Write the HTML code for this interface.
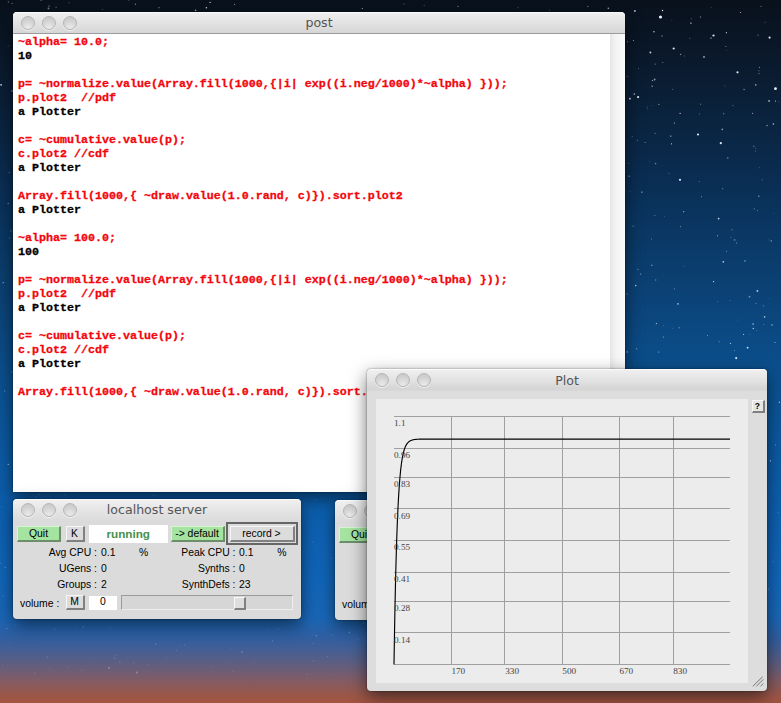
<!DOCTYPE html>
<html><head><meta charset="utf-8"><title>post</title>
<style>
html,body{margin:0;padding:0;}
body{width:781px;height:703px;overflow:hidden;position:relative;font-family:"Liberation Sans",sans-serif;
background:linear-gradient(to bottom,#09111c 0px,#0a1626 40px,#0a2038 100px,#0a2a4c 160px,#0a3560 220px,#0b4072 280px,#0b4a84 340px,#0b5496 400px,#0c5ba6 460px,#0d61b2 520px,#1166ba 580px,#1a67b8 618px,#305fa2 637px,#415f96 648px,#5f5e80 664px,#7f5c68 679px,#98574c 693px,#a4543f 703px);}
#stars{position:absolute;left:0;top:0;}
.win{position:absolute;border-radius:4px 4px 0 0;box-shadow:0 6px 18px rgba(0,0,0,.55),0 0 2px rgba(0,0,0,.5);overflow:hidden;}
.tb{position:absolute;left:0;right:0;top:0;background:linear-gradient(#f0f0f0,#e3e3e3 50%,#d6d6d6);border-bottom:1px solid #9c9c9c;border-radius:4px 4px 0 0;box-shadow:inset 0 1px 0 rgba(255,255,255,.7);}
.tt{position:absolute;text-align:center;color:#555;font-size:12.6px;font-family:"DejaVu Sans","Liberation Sans",sans-serif;}
.tl{position:absolute;top:4px;width:12px;height:12px;border-radius:50%;border:1px solid #b6b6b6;background:radial-gradient(circle at 50% 90%,#ebebeb,#d6d6d6 50%,#c4c4c4);box-shadow:0 1px 0 rgba(255,255,255,.6);}
.ln{font-family:"Liberation Mono",monospace;font-weight:bold;font-size:11.667px;line-height:14px;height:14px;white-space:pre;-webkit-text-stroke:0.3px currentColor;}
.r{color:#f4060c}.k{color:#000}
.sbody{position:absolute;left:0;right:0;top:22px;bottom:0;background:#dadada;}
.btn{position:absolute;box-sizing:border-box;border:solid;border-width:1px 2px 2px 1px;border-color:#f6f6f6 #808080 #808080 #f6f6f6;background:#dcdcdc;font-size:10.4px;line-height:13px;text-align:center;color:#000;white-space:nowrap;}
.btn.g{background:#a4e3a0;border-color:#d6f5d3 #6c8f6a #6c8f6a #d6f5d3}
.run{position:absolute;background:#fff;color:#46904c;font-weight:bold;font-size:11.7px;line-height:18px;text-align:center}
.rec{position:absolute;border:2px solid #666;box-sizing:border-box;}
.lb{position:absolute;font-size:10.4px;line-height:16px;color:#000;white-space:nowrap}
.num{position:absolute;background:#fff;font-size:10.4px;line-height:12px;text-align:center;box-sizing:border-box}
.sld{position:absolute;background:#d6d6d6;border:1px solid;border-color:#9a9a9a #eee #eee #9a9a9a;box-sizing:border-box}
.knob{position:absolute;box-sizing:border-box;background:#dedede;border:solid;border-width:1px 2px 2px 1px;border-color:#f8f8f8 #808080 #808080 #f8f8f8}
svg text{font-family:"Liberation Serif",serif;font-size:9.2px;fill:#444}
</style></head><body>
<svg id="stars" width="781" height="703" viewBox="0 0 781 703" fill="#e8f0ff">
<circle cx="331.5" cy="558.0" r="0.45" fill-opacity="0.41"/>
<circle cx="363.6" cy="623.2" r="0.6" fill-opacity="0.22"/>
<circle cx="224.9" cy="661.5" r="0.45" fill-opacity="0.17"/>
<circle cx="267.1" cy="629.8" r="0.6" fill-opacity="0.15"/>
<circle cx="683.7" cy="211.7" r="0.6" fill-opacity="0.69"/>
<circle cx="737.8" cy="320.0" r="0.45" fill-opacity="0.34"/>
<circle cx="641.9" cy="192.1" r="0.6" fill-opacity="0.88"/>
<circle cx="734.6" cy="239.9" r="0.9" fill-opacity="0.38"/>
<circle cx="680.6" cy="54.4" r="0.7" fill-opacity="0.56"/>
<circle cx="770.4" cy="460.8" r="0.6" fill-opacity="0.92"/>
<circle cx="3.2" cy="282.7" r="0.6" fill-opacity="0.70"/>
<circle cx="148.9" cy="664.5" r="0.7" fill-opacity="0.11"/>
<circle cx="41.1" cy="0.2" r="0.5" fill-opacity="0.65"/>
<circle cx="763.7" cy="324.2" r="0.55" fill-opacity="0.36"/>
<circle cx="647.3" cy="109.0" r="0.4" fill-opacity="0.43"/>
<circle cx="312.9" cy="542.1" r="0.5" fill-opacity="0.29"/>
<circle cx="349.3" cy="632.4" r="0.6" fill-opacity="0.41"/>
<circle cx="656.4" cy="323.6" r="0.6" fill-opacity="0.82"/>
<circle cx="629.9" cy="98.7" r="0.9" fill-opacity="0.94"/>
<circle cx="102.3" cy="9.6" r="0.45" fill-opacity="0.64"/>
<circle cx="645.2" cy="142.4" r="0.55" fill-opacity="0.44"/>
<circle cx="636.6" cy="348.8" r="0.8" fill-opacity="0.38"/>
<circle cx="689.8" cy="38.3" r="0.5" fill-opacity="0.48"/>
<circle cx="700.6" cy="104.2" r="0.6" fill-opacity="0.39"/>
<circle cx="755.7" cy="148.2" r="0.45" fill-opacity="0.56"/>
<circle cx="773.1" cy="561.8" r="0.5" fill-opacity="0.34"/>
<circle cx="230.7" cy="648.4" r="0.45" fill-opacity="0.25"/>
<circle cx="758.9" cy="70.7" r="0.55" fill-opacity="0.48"/>
<circle cx="699.2" cy="181.5" r="0.4" fill-opacity="0.71"/>
<circle cx="195.6" cy="10.4" r="0.8" fill-opacity="0.66"/>
<circle cx="651.8" cy="265.3" r="0.8" fill-opacity="0.50"/>
<circle cx="109.1" cy="667.8" r="1.1" fill-opacity="0.26"/>
<circle cx="210.1" cy="2.4" r="0.6" fill-opacity="0.93"/>
<circle cx="754.2" cy="208.9" r="0.6" fill-opacity="0.42"/>
<circle cx="638.1" cy="97.1" r="1.1" fill-opacity="0.95"/>
<circle cx="769.1" cy="100.9" r="0.9" fill-opacity="0.72"/>
<circle cx="634.3" cy="94.0" r="0.8" fill-opacity="0.79"/>
<circle cx="634.9" cy="10.9" r="0.9" fill-opacity="0.82"/>
<circle cx="54.8" cy="629.3" r="0.8" fill-opacity="0.16"/>
<circle cx="759.5" cy="67.2" r="0.5" fill-opacity="0.74"/>
<circle cx="698.0" cy="134.5" r="1.1" fill-opacity="0.95"/>
<circle cx="756.1" cy="303.3" r="0.55" fill-opacity="0.55"/>
<circle cx="726.7" cy="50.4" r="0.45" fill-opacity="0.39"/>
<circle cx="744.1" cy="89.5" r="0.8" fill-opacity="0.48"/>
<circle cx="684.3" cy="266.0" r="0.5" fill-opacity="0.30"/>
<circle cx="1.4" cy="506.7" r="0.6" fill-opacity="0.17"/>
<circle cx="306.9" cy="674.1" r="0.9" fill-opacity="0.09"/>
<circle cx="116.3" cy="655.3" r="0.6" fill-opacity="0.17"/>
<circle cx="291.6" cy="645.3" r="0.4" fill-opacity="0.22"/>
<circle cx="38.6" cy="494.3" r="0.7" fill-opacity="0.31"/>
<circle cx="679.1" cy="327.7" r="0.8" fill-opacity="0.38"/>
<circle cx="707.6" cy="335.5" r="0.5" fill-opacity="0.59"/>
<circle cx="632.1" cy="136.4" r="0.4" fill-opacity="0.79"/>
<circle cx="755.8" cy="84.9" r="0.8" fill-opacity="0.64"/>
<circle cx="662.8" cy="62.5" r="0.5" fill-opacity="0.55"/>
<circle cx="756.2" cy="330.6" r="0.45" fill-opacity="0.55"/>
<circle cx="759.3" cy="167.7" r="0.45" fill-opacity="0.45"/>
<circle cx="759.0" cy="73.5" r="0.7" fill-opacity="0.36"/>
<circle cx="1.1" cy="84.8" r="0.9" fill-opacity="0.90"/>
<circle cx="8.2" cy="203.5" r="0.7" fill-opacity="0.48"/>
<circle cx="655.6" cy="163.6" r="0.8" fill-opacity="0.45"/>
<circle cx="757.5" cy="210.4" r="0.5" fill-opacity="0.45"/>
<circle cx="743.5" cy="334.6" r="0.5" fill-opacity="0.88"/>
<circle cx="711.0" cy="38.1" r="0.9" fill-opacity="0.40"/>
<circle cx="166.3" cy="657.4" r="0.5" fill-opacity="0.15"/>
<circle cx="769.3" cy="298.6" r="0.45" fill-opacity="0.30"/>
<circle cx="274.5" cy="644.9" r="0.45" fill-opacity="0.18"/>
<circle cx="627.4" cy="41.8" r="0.5" fill-opacity="0.79"/>
<circle cx="2.9" cy="510.0" r="0.45" fill-opacity="0.14"/>
<circle cx="745.0" cy="260.9" r="0.55" fill-opacity="0.89"/>
<circle cx="6.8" cy="628.4" r="0.55" fill-opacity="0.38"/>
<circle cx="254.4" cy="661.6" r="0.45" fill-opacity="0.25"/>
<circle cx="775.1" cy="342.4" r="0.5" fill-opacity="0.72"/>
<circle cx="3.5" cy="595.8" r="0.5" fill-opacity="0.38"/>
<circle cx="726.5" cy="251.2" r="0.5" fill-opacity="0.59"/>
<circle cx="158.9" cy="7.7" r="0.6" fill-opacity="0.57"/>
<circle cx="211.8" cy="666.9" r="0.55" fill-opacity="0.15"/>
<circle cx="316.3" cy="635.7" r="0.6" fill-opacity="0.40"/>
<circle cx="640.7" cy="274.1" r="0.6" fill-opacity="0.60"/>
<circle cx="11.6" cy="372.2" r="0.6" fill-opacity="0.36"/>
<circle cx="723.3" cy="261.8" r="0.9" fill-opacity="0.75"/>
<circle cx="733.0" cy="105.6" r="0.6" fill-opacity="0.38"/>
<circle cx="654.6" cy="79.5" r="0.9" fill-opacity="0.60"/>
<circle cx="2.7" cy="665.5" r="0.7" fill-opacity="0.12"/>
<circle cx="64.2" cy="495.0" r="0.8" fill-opacity="0.16"/>
<circle cx="753.1" cy="324.0" r="0.9" fill-opacity="0.47"/>
<circle cx="699.3" cy="113.9" r="0.55" fill-opacity="0.37"/>
<circle cx="81.7" cy="670.1" r="0.6" fill-opacity="0.21"/>
<circle cx="242.2" cy="651.9" r="0.9" fill-opacity="0.24"/>
<circle cx="647.0" cy="107.1" r="0.4" fill-opacity="0.91"/>
<circle cx="206.4" cy="7.8" r="0.8" fill-opacity="0.88"/>
<circle cx="128.9" cy="0.3" r="0.4" fill-opacity="0.65"/>
<circle cx="608.3" cy="8.3" r="0.8" fill-opacity="0.73"/>
<circle cx="137.0" cy="672.6" r="1.1" fill-opacity="0.26"/>
<circle cx="753.8" cy="146.4" r="0.8" fill-opacity="0.31"/>
<circle cx="764.6" cy="316.9" r="0.8" fill-opacity="0.75"/>
<circle cx="83.3" cy="626.9" r="0.6" fill-opacity="0.42"/>
<circle cx="155.7" cy="644.2" r="0.8" fill-opacity="0.24"/>
<circle cx="737.5" cy="72.3" r="1.1" fill-opacity="0.95"/>
<circle cx="726.4" cy="32.7" r="0.6" fill-opacity="0.89"/>
<circle cx="747.6" cy="347.7" r="0.9" fill-opacity="0.91"/>
<circle cx="308.2" cy="600.9" r="0.45" fill-opacity="0.26"/>
<circle cx="133.6" cy="663.0" r="0.5" fill-opacity="0.25"/>
<circle cx="677.9" cy="303.9" r="0.8" fill-opacity="0.78"/>
<circle cx="658.9" cy="104.3" r="0.5" fill-opacity="0.93"/>
<circle cx="184.5" cy="645.0" r="0.55" fill-opacity="0.25"/>
<circle cx="79.5" cy="649.5" r="0.45" fill-opacity="0.12"/>
<circle cx="362.3" cy="8.5" r="0.6" fill-opacity="0.75"/>
<circle cx="316.1" cy="500.0" r="0.6" fill-opacity="0.34"/>
<circle cx="663.4" cy="325.8" r="0.4" fill-opacity="0.70"/>
<circle cx="734.6" cy="350.4" r="0.45" fill-opacity="0.85"/>
<circle cx="773.4" cy="124.0" r="0.8" fill-opacity="0.80"/>
<circle cx="768.9" cy="239.9" r="0.4" fill-opacity="0.46"/>
<circle cx="312.8" cy="643.6" r="0.5" fill-opacity="0.26"/>
<circle cx="725.9" cy="46.5" r="0.5" fill-opacity="0.60"/>
<circle cx="176.5" cy="650.5" r="0.6" fill-opacity="0.20"/>
<circle cx="778.0" cy="512.8" r="0.5" fill-opacity="0.36"/>
<circle cx="736.2" cy="358.1" r="1.1" fill-opacity="0.95"/>
<circle cx="9.0" cy="642.3" r="0.55" fill-opacity="0.12"/>
<circle cx="655.1" cy="133.2" r="0.5" fill-opacity="0.65"/>
<circle cx="5.2" cy="567.4" r="0.7" fill-opacity="0.34"/>
<circle cx="332.6" cy="674.8" r="0.45" fill-opacity="0.11"/>
<circle cx="35.8" cy="497.1" r="0.6" fill-opacity="0.37"/>
<circle cx="768.7" cy="589.1" r="0.6" fill-opacity="0.42"/>
<circle cx="234.6" cy="4.2" r="0.5" fill-opacity="0.83"/>
<circle cx="684.4" cy="56.0" r="0.4" fill-opacity="0.73"/>
<circle cx="717.4" cy="301.3" r="0.4" fill-opacity="0.74"/>
<circle cx="775.6" cy="445.0" r="0.5" fill-opacity="0.61"/>
<circle cx="12.1" cy="3.2" r="0.45" fill-opacity="0.94"/>
<circle cx="713.5" cy="35.5" r="1.1" fill-opacity="0.95"/>
<circle cx="672.4" cy="328.2" r="0.4" fill-opacity="0.51"/>
<circle cx="130.0" cy="652.2" r="0.45" fill-opacity="0.14"/>
<circle cx="47.4" cy="657.3" r="0.9" fill-opacity="0.14"/>
<circle cx="630.6" cy="191.2" r="0.4" fill-opacity="0.51"/>
<circle cx="122.8" cy="621.3" r="0.4" fill-opacity="0.22"/>
<circle cx="114.8" cy="658.3" r="0.8" fill-opacity="0.20"/>
<circle cx="727.7" cy="157.9" r="0.9" fill-opacity="0.34"/>
<circle cx="458.0" cy="6.3" r="0.6" fill-opacity="0.60"/>
<circle cx="34.8" cy="673.0" r="0.6" fill-opacity="0.23"/>
<circle cx="722.8" cy="188.8" r="0.45" fill-opacity="0.92"/>
<circle cx="357.9" cy="639.2" r="0.45" fill-opacity="0.39"/>
<circle cx="719.2" cy="341.8" r="0.5" fill-opacity="0.59"/>
<circle cx="653.9" cy="31.7" r="0.8" fill-opacity="0.76"/>
<circle cx="769.6" cy="37.6" r="1.1" fill-opacity="0.95"/>
<circle cx="650.4" cy="52.5" r="0.9" fill-opacity="0.86"/>
<circle cx="75.7" cy="626.8" r="0.4" fill-opacity="0.32"/>
<circle cx="680.0" cy="179.8" r="1.1" fill-opacity="0.95"/>
<circle cx="628.0" cy="175.9" r="0.45" fill-opacity="0.51"/>
<circle cx="89.2" cy="660.5" r="0.4" fill-opacity="0.19"/>
<circle cx="652.4" cy="80.4" r="0.5" fill-opacity="0.93"/>
<circle cx="658.7" cy="352.1" r="0.5" fill-opacity="0.76"/>
<circle cx="633.1" cy="226.2" r="0.7" fill-opacity="0.36"/>
<circle cx="278.2" cy="629.1" r="0.8" fill-opacity="0.16"/>
<circle cx="701.4" cy="196.8" r="0.45" fill-opacity="0.92"/>
<circle cx="755.6" cy="151.0" r="0.5" fill-opacity="0.41"/>
<circle cx="15.2" cy="625.1" r="0.5" fill-opacity="0.21"/>
<circle cx="740.5" cy="12.5" r="0.6" fill-opacity="0.75"/>
<circle cx="758.0" cy="35.1" r="0.6" fill-opacity="0.52"/>
<circle cx="662.0" cy="36.1" r="0.8" fill-opacity="0.40"/>
<circle cx="517.9" cy="7.8" r="0.45" fill-opacity="0.65"/>
<circle cx="690.9" cy="23.2" r="0.9" fill-opacity="0.47"/>
<circle cx="338.7" cy="641.7" r="0.55" fill-opacity="0.10"/>
<circle cx="704.0" cy="57.0" r="0.9" fill-opacity="0.65"/>
<circle cx="9.3" cy="238.0" r="0.5" fill-opacity="0.51"/>
<circle cx="651.6" cy="239.0" r="0.45" fill-opacity="0.64"/>
<circle cx="655.2" cy="64.1" r="0.7" fill-opacity="0.47"/>
<circle cx="775.5" cy="101.0" r="0.55" fill-opacity="0.87"/>
<circle cx="663.5" cy="337.1" r="0.7" fill-opacity="0.50"/>
<circle cx="627.1" cy="294.0" r="0.6" fill-opacity="0.68"/>
<circle cx="718.6" cy="218.6" r="0.9" fill-opacity="0.84"/>
<circle cx="711.2" cy="7.2" r="0.4" fill-opacity="0.47"/>
<circle cx="8.1" cy="46.1" r="0.5" fill-opacity="0.36"/>
<circle cx="753.3" cy="328.5" r="0.7" fill-opacity="0.80"/>
<circle cx="730.5" cy="343.4" r="0.6" fill-opacity="0.71"/>
<circle cx="637.4" cy="140.2" r="0.5" fill-opacity="0.57"/>
<circle cx="8.4" cy="1.9" r="0.8" fill-opacity="0.30"/>
<circle cx="48.5" cy="8.4" r="0.9" fill-opacity="0.51"/>
<circle cx="749.5" cy="296.7" r="0.9" fill-opacity="0.45"/>
<circle cx="135.5" cy="4.2" r="0.7" fill-opacity="0.50"/>
<circle cx="749.8" cy="334.4" r="0.45" fill-opacity="0.46"/>
<circle cx="758.8" cy="196.2" r="0.8" fill-opacity="0.54"/>
<circle cx="680.6" cy="226.7" r="0.45" fill-opacity="0.92"/>
<circle cx="628.6" cy="163.2" r="0.5" fill-opacity="0.36"/>
<circle cx="652.1" cy="86.2" r="0.7" fill-opacity="0.60"/>
<circle cx="779.4" cy="402.2" r="0.7" fill-opacity="0.68"/>
<circle cx="664.6" cy="216.7" r="0.45" fill-opacity="0.34"/>
<circle cx="637.9" cy="269.3" r="0.6" fill-opacity="0.56"/>
<circle cx="672.7" cy="89.2" r="0.55" fill-opacity="0.41"/>
<circle cx="700.5" cy="17.0" r="0.7" fill-opacity="0.46"/>
<circle cx="0.8" cy="563.0" r="0.55" fill-opacity="0.40"/>
<circle cx="713.6" cy="281.6" r="0.6" fill-opacity="0.95"/>
<circle cx="272.6" cy="640.9" r="0.7" fill-opacity="0.24"/>
<circle cx="724.9" cy="86.1" r="0.5" fill-opacity="0.33"/>
<circle cx="629.3" cy="176.3" r="0.8" fill-opacity="0.41"/>
<circle cx="752.6" cy="113.4" r="0.6" fill-opacity="0.57"/>
<circle cx="730.9" cy="237.2" r="0.55" fill-opacity="0.39"/>
<circle cx="331.6" cy="635.2" r="0.5" fill-opacity="0.31"/>
<circle cx="56.1" cy="7.3" r="0.7" fill-opacity="0.35"/>
<circle cx="424.1" cy="5.6" r="0.45" fill-opacity="0.72"/>
<circle cx="723.8" cy="113.7" r="0.55" fill-opacity="0.78"/>
<circle cx="649.3" cy="161.6" r="0.4" fill-opacity="0.37"/>
<circle cx="313.5" cy="660.7" r="0.7" fill-opacity="0.17"/>
<circle cx="49.0" cy="5.9" r="0.5" fill-opacity="0.89"/>
<circle cx="633.5" cy="40.5" r="0.6" fill-opacity="0.70"/>
<circle cx="691.3" cy="18.8" r="0.5" fill-opacity="0.44"/>
<circle cx="736.6" cy="243.0" r="0.5" fill-opacity="0.67"/>
<circle cx="773.7" cy="487.0" r="0.45" fill-opacity="0.27"/>
<circle cx="68.5" cy="667.2" r="0.5" fill-opacity="0.18"/>
<circle cx="680.1" cy="113.4" r="0.6" fill-opacity="0.82"/>
<circle cx="9.1" cy="172.5" r="0.5" fill-opacity="0.54"/>
<circle cx="627.2" cy="76.2" r="0.5" fill-opacity="0.47"/>
<circle cx="10.8" cy="231.1" r="0.5" fill-opacity="0.62"/>
<circle cx="179.0" cy="646.5" r="0.8" fill-opacity="0.09"/>
<circle cx="4.7" cy="390.9" r="0.6" fill-opacity="0.45"/>
<circle cx="49.6" cy="669.0" r="0.6" fill-opacity="0.18"/>
<circle cx="772.0" cy="324.9" r="0.6" fill-opacity="0.88"/>
<circle cx="778.4" cy="101.8" r="0.5" fill-opacity="0.30"/>
<circle cx="732.1" cy="229.8" r="0.5" fill-opacity="0.68"/>
<circle cx="771.2" cy="240.9" r="0.6" fill-opacity="0.77"/>
<circle cx="654.9" cy="215.5" r="0.5" fill-opacity="0.48"/>
<circle cx="153.6" cy="495.3" r="0.5" fill-opacity="0.31"/>
<circle cx="720.8" cy="143.2" r="1.1" fill-opacity="0.95"/>
<circle cx="312.1" cy="634.5" r="0.4" fill-opacity="0.14"/>
<circle cx="652.1" cy="105.7" r="0.4" fill-opacity="0.40"/>
<circle cx="635.7" cy="285.6" r="0.8" fill-opacity="0.74"/>
<circle cx="119.8" cy="662.3" r="0.9" fill-opacity="0.14"/>
<circle cx="763.3" cy="305.8" r="0.55" fill-opacity="0.53"/>
<circle cx="313.1" cy="660.8" r="0.4" fill-opacity="0.19"/>
<circle cx="671.5" cy="143.8" r="0.6" fill-opacity="0.89"/>
<circle cx="671.9" cy="20.7" r="0.4" fill-opacity="0.47"/>
<circle cx="233.1" cy="671.0" r="0.5" fill-opacity="0.25"/>
<circle cx="69.1" cy="2.7" r="0.5" fill-opacity="0.41"/>
<circle cx="674.3" cy="123.0" r="0.5" fill-opacity="0.95"/>
<circle cx="761.0" cy="6.4" r="0.55" fill-opacity="0.40"/>
<circle cx="765.1" cy="22.2" r="0.5" fill-opacity="0.43"/>
<circle cx="12.0" cy="91.0" r="0.9" fill-opacity="0.45"/>
<circle cx="773.8" cy="213.6" r="0.45" fill-opacity="0.38"/>
<circle cx="717.5" cy="235.8" r="0.5" fill-opacity="0.85"/>
<circle cx="549.5" cy="10.3" r="0.55" fill-opacity="0.34"/>
<circle cx="8.3" cy="464.4" r="0.7" fill-opacity="0.65"/>
<circle cx="327.4" cy="656.6" r="0.6" fill-opacity="0.21"/>
<circle cx="774.0" cy="557.2" r="0.45" fill-opacity="0.16"/>
<circle cx="762.2" cy="179.8" r="0.6" fill-opacity="0.35"/>
<circle cx="674.5" cy="288.9" r="0.6" fill-opacity="0.40"/>
<circle cx="627.3" cy="351.9" r="0.7" fill-opacity="0.73"/>
<circle cx="404.0" cy="4.0" r="0.5" fill-opacity="0.54"/>
<circle cx="670.8" cy="136.1" r="0.6" fill-opacity="0.92"/>
<circle cx="757.4" cy="290.9" r="0.9" fill-opacity="0.83"/>
<circle cx="722.3" cy="129.3" r="0.9" fill-opacity="0.54"/>
<circle cx="655.7" cy="280.0" r="0.7" fill-opacity="0.41"/>
<circle cx="587.9" cy="6.4" r="0.5" fill-opacity="0.78"/>
<circle cx="638.5" cy="68.6" r="0.45" fill-opacity="0.85"/>
<circle cx="767.1" cy="125.6" r="0.8" fill-opacity="0.48"/>
<circle cx="669.0" cy="173.5" r="0.5" fill-opacity="0.39"/>
<circle cx="110.3" cy="627.9" r="0.6" fill-opacity="0.19"/>
<circle cx="730.1" cy="300.2" r="0.5" fill-opacity="0.34"/>
<circle cx="673.7" cy="48.5" r="1.1" fill-opacity="0.95"/>
<circle cx="660.5" cy="17" r="1.6"/><circle cx="662.5" cy="10.5" r="0.7"/><circle cx="775.5" cy="88.7" r="1.4"/>
</svg>

<!-- post window -->
<div class="win" style="left:13px;top:12px;width:612px;height:480px;background:#fff;">
  <div class="tb" style="height:21px"><i class="tl" style="left:8px"></i><i class="tl" style="left:29px"></i><i class="tl" style="left:50px"></i><span class="tt" style="line-height:22px;left:0;right:0">post</span></div>
  <div style="position:absolute;left:5px;top:23px;">
<div class="ln r">~alpha= 10.0;</div>
<div class="ln k">10</div>
<div class="ln ">&nbsp;</div>
<div class="ln r">p= ~normalize.value(Array.fill(1000,{|i| exp((i.neg/1000)*~alpha) }));</div>
<div class="ln r">p.plot2&nbsp; //pdf</div>
<div class="ln k">a Plotter</div>
<div class="ln ">&nbsp;</div>
<div class="ln r">c= ~cumulative.value(p);</div>
<div class="ln r">c.plot2 //cdf</div>
<div class="ln k">a Plotter</div>
<div class="ln ">&nbsp;</div>
<div class="ln r">Array.fill(1000,{ ~draw.value(1.0.rand, c)}).sort.plot2</div>
<div class="ln k">a Plotter</div>
<div class="ln ">&nbsp;</div>
<div class="ln r">~alpha= 100.0;</div>
<div class="ln k">100</div>
<div class="ln ">&nbsp;</div>
<div class="ln r">p= ~normalize.value(Array.fill(1000,{|i| exp((i.neg/1000)*~alpha) }));</div>
<div class="ln r">p.plot2&nbsp; //pdf</div>
<div class="ln k">a Plotter</div>
<div class="ln ">&nbsp;</div>
<div class="ln r">c= ~cumulative.value(p);</div>
<div class="ln r">c.plot2 //cdf</div>
<div class="ln k">a Plotter</div>
<div class="ln ">&nbsp;</div>
<div class="ln r">Array.fill(1000,{ ~draw.value(1.0.rand, c)}).sort.plot2</div>
  </div>
  <div style="position:absolute;left:597px;top:22px;width:15px;bottom:0;background:linear-gradient(to right,#e6e6e6,#f4f4f4 40%,#fafafa);"></div>
</div>


<div class="win srv" style="left:13px;top:499px;width:288px;height:120px;border-radius:4px;background:#dbdbdb">
  <div class="tb" style="height:22px;border-bottom:none;background:linear-gradient(#f1f1f1,#e6e6e6 45%,#dbdbdb)"><i class="tl" style="left:8px"></i><i class="tl" style="left:29px"></i><i class="tl" style="left:50px"></i><span class="tt" style="line-height:22px;left:0;right:0">localhost server</span></div>
  <div class="btn g" style="left:4px;top:27px;width:44px;height:16px">Quit</div>
  <div class="btn" style="left:52.5px;top:27px;width:19px;height:16px">K</div>
  <div class="run" style="left:76px;top:26px;width:78.5px;height:18px">running</div>
  <div class="btn g" style="left:157.5px;top:27px;width:54px;height:16px">-&gt; default</div>
  <div class="rec" style="left:213px;top:23px;width:71.5px;height:23px"></div>
  <div class="btn" style="left:216.5px;top:27px;width:65px;height:16px">record &gt;</div>
  <span class="lb" style="left:0;width:84px;top:46px;text-align:right">Avg CPU :</span><span class="lb" style="left:88px;top:46px">0.1</span><span class="lb" style="left:120px;width:102.5px;top:46px;text-align:right">Peak CPU :</span><span class="lb" style="left:226px;top:46px">0.1</span><span class="lb" style="left:126px;top:46px">%</span><span class="lb" style="left:264.3px;top:46px">%</span>
  <span class="lb" style="left:0;width:84px;top:62.400000000000006px;text-align:right">UGens :</span><span class="lb" style="left:88px;top:62.400000000000006px">0</span><span class="lb" style="left:120px;width:102.5px;top:62.400000000000006px;text-align:right">Synths :</span><span class="lb" style="left:226px;top:62.400000000000006px">0</span>
  <span class="lb" style="left:0;width:84px;top:78px;text-align:right">Groups :</span><span class="lb" style="left:88px;top:78px">2</span><span class="lb" style="left:120px;width:102.5px;top:78px;text-align:right">SynthDefs :</span><span class="lb" style="left:226px;top:78px">23</span>
  <span class="lb" style="left:7px;top:96.5px">volume :</span>
  <div class="btn" style="left:52.5px;top:96px;width:19px;height:15px;line-height:11px">M</div>
  <div class="num" style="left:76px;top:97px;width:28px;height:14px">0</div>
  <div class="sld" style="left:108px;top:96px;width:171.5px;height:15px"><div class="knob" style="left:111.5px;top:1px;width:12px;height:12.5px"></div></div>
</div>

<div class="win srv" style="left:335px;top:500px;width:288px;height:120px;border-radius:4px;background:#dbdbdb">
  <div class="tb" style="height:22px;border-bottom:none;background:linear-gradient(#f1f1f1,#e6e6e6 45%,#dbdbdb)"><i class="tl" style="left:8px"></i><i class="tl" style="left:29px"></i><i class="tl" style="left:50px"></i><span class="tt" style="line-height:22px;left:0;right:0">localhost server</span></div>
  <div class="btn g" style="left:4px;top:27px;width:44px;height:16px">Quit</div>
  <div class="btn" style="left:52.5px;top:27px;width:19px;height:16px">K</div>
  <div class="run" style="left:76px;top:26px;width:78.5px;height:18px">running</div>
  <div class="btn g" style="left:157.5px;top:27px;width:54px;height:16px">-&gt; default</div>
  <div class="rec" style="left:213px;top:23px;width:71.5px;height:23px"></div>
  <div class="btn" style="left:216.5px;top:27px;width:65px;height:16px">record &gt;</div>
  <span class="lb" style="left:0;width:84px;top:46px;text-align:right">Avg CPU :</span><span class="lb" style="left:88px;top:46px">0.1</span><span class="lb" style="left:120px;width:102.5px;top:46px;text-align:right">Peak CPU :</span><span class="lb" style="left:226px;top:46px">0.1</span><span class="lb" style="left:126px;top:46px">%</span><span class="lb" style="left:264.3px;top:46px">%</span>
  <span class="lb" style="left:0;width:84px;top:62.400000000000006px;text-align:right">UGens :</span><span class="lb" style="left:88px;top:62.400000000000006px">0</span><span class="lb" style="left:120px;width:102.5px;top:62.400000000000006px;text-align:right">Synths :</span><span class="lb" style="left:226px;top:62.400000000000006px">0</span>
  <span class="lb" style="left:0;width:84px;top:78px;text-align:right">Groups :</span><span class="lb" style="left:88px;top:78px">2</span><span class="lb" style="left:120px;width:102.5px;top:78px;text-align:right">SynthDefs :</span><span class="lb" style="left:226px;top:78px">23</span>
  <span class="lb" style="left:7px;top:96.5px">volume :</span>
  <div class="btn" style="left:52.5px;top:96px;width:19px;height:15px;line-height:11px">M</div>
  <div class="num" style="left:76px;top:97px;width:28px;height:14px">0</div>
  <div class="sld" style="left:108px;top:96px;width:171.5px;height:15px"><div class="knob" style="left:111.5px;top:1px;width:12px;height:12.5px"></div></div>
</div>

<!-- plot window -->
<div class="win" style="left:367px;top:369px;width:400px;height:322px;background:#dddddd;border-radius:4px;">
  <div class="tb" style="height:22px;border-bottom:none;background:linear-gradient(#f0f0f0,#e3e3e3 50%,#d5d5d5 90%,#d8d8d8)"><i class="tl" style="left:8px;top:4px"></i><i class="tl" style="left:29px;top:4px"></i><i class="tl" style="left:50px;top:4px"></i><span class="tt" style="line-height:23px;left:0;right:0">Plot</span></div>
  <div style="position:absolute;left:9px;top:30px;width:372px;height:284px;background:#ececec;"></div>
  <svg width="400" height="322" viewBox="0 0 400 322" style="position:absolute;left:0;top:0">
    <g stroke="#a0a0a0" stroke-width="1">
<line x1="27.0" x2="363.0" y1="47.5" y2="47.5"/>
<line x1="27.0" x2="363.0" y1="79.5" y2="79.5"/>
<line x1="27.0" x2="363.0" y1="108.5" y2="108.5"/>
<line x1="27.0" x2="363.0" y1="139.5" y2="139.5"/>
<line x1="27.0" x2="363.0" y1="171.5" y2="171.5"/>
<line x1="27.0" x2="363.0" y1="203.5" y2="203.5"/>
<line x1="27.0" x2="363.0" y1="232.5" y2="232.5"/>
<line x1="27.0" x2="363.0" y1="263.5" y2="263.5"/>
<line x1="27.0" x2="363.0" y1="295.5" y2="295.5"/>
<line x1="84.5" x2="84.5" y1="47.0" y2="296.0"/>
<line x1="137.5" x2="137.5" y1="47.0" y2="296.0"/>
<line x1="195.5" x2="195.5" y1="47.0" y2="296.0"/>
<line x1="252.5" x2="252.5" y1="47.0" y2="296.0"/>
<line x1="306.5" x2="306.5" y1="47.0" y2="296.0"/>
    </g>
    <polyline points="27.00,295.50 27.34,274.05 27.67,254.63 28.01,237.07 28.34,221.17 28.68,206.79 29.02,193.78 29.35,182.00 29.69,171.35 30.02,161.71 30.36,152.99 30.70,145.09 31.03,137.95 31.37,131.49 31.70,125.64 32.04,120.35 32.38,115.56 32.71,111.23 33.05,107.31 33.38,103.77 33.72,100.56 34.06,97.65 34.39,95.03 34.73,92.65 35.06,90.50 35.40,88.55 35.74,86.79 36.07,85.20 36.41,83.76 36.74,82.45 37.08,81.27 37.42,80.20 37.75,79.24 38.09,78.36 38.42,77.57 38.76,76.85 39.10,76.21 39.43,75.62 39.77,75.09 40.10,74.61 40.44,74.17 40.78,73.78 41.11,73.43 41.45,73.10 41.78,72.81 42.12,72.55 42.46,72.31 42.79,72.10 43.13,71.90 43.46,71.72 43.80,71.56 44.14,71.42 44.47,71.29 44.81,71.17 45.14,71.06 45.48,70.97 45.82,70.88 46.15,70.80 46.49,70.73 46.82,70.66 47.16,70.60 47.50,70.55 47.83,70.50 48.17,70.46 48.50,70.42 48.84,70.38 49.18,70.35 49.51,70.32 49.85,70.30 50.18,70.27 50.52,70.25 50.86,70.23 51.19,70.21 51.53,70.20 51.86,70.18 52.20,70.17 52.54,70.16 52.87,70.15 53.21,70.14 53.54,70.13 53.88,70.12 54.22,70.11 54.55,70.11 54.89,70.10 55.22,70.10 55.56,70.09 55.90,70.09 56.23,70.08 56.57,70.08 56.90,70.08 57.24,70.07 57.58,70.07 57.91,70.07 58.25,70.07 58.58,70.06 58.92,70.06 59.26,70.06 59.59,70.06 59.93,70.06 60.26,70.06 60.60,70.06 60.94,70.05 61.27,70.05 61.61,70.05 61.94,70.05 62.28,70.05 62.62,70.05 62.95,70.05 63.29,70.05 63.62,70.05 63.96,70.05 64.30,70.05 64.63,70.05 64.97,70.05 65.30,70.05 65.64,70.05 65.98,70.05 66.31,70.05 66.65,70.05 66.98,70.05 67.32,70.05 67.66,70.05 363.00,70.05" fill="none" stroke="#000" stroke-width="1.15" stroke-linejoin="round"/>
<text x="27.0" y="57.3">1.1</text>
<text x="27.0" y="88.9">0.96</text>
<text x="27.0" y="118.2">0.83</text>
<text x="27.0" y="149.7">0.69</text>
<text x="27.0" y="181.3">0.55</text>
<text x="27.0" y="212.9">0.41</text>
<text x="27.0" y="242.2">0.28</text>
<text x="27.0" y="273.7">0.14</text>
<text x="84.4" y="305.3">170</text>
<text x="138.2" y="305.3">330</text>
<text x="195.3" y="305.3">500</text>
<text x="252.4" y="305.3">670</text>
<text x="306.2" y="305.3">830</text>
    <g stroke="#777" stroke-width="1"><line x1="385.8" y1="317.3" x2="395.7" y2="307.7"/><line x1="389.4" y1="317.3" x2="396.3" y2="310.4"/><line x1="393.6" y1="317.3" x2="396.3" y2="314.4"/></g>
  </svg>
  <div class="btn" style="left:384.5px;top:30.5px;width:13px;height:13px;line-height:10px;font-size:8.5px;font-weight:bold;background:#e6e6e6;text-indent:-0.5px">?</div>
</div>
</body></html>
